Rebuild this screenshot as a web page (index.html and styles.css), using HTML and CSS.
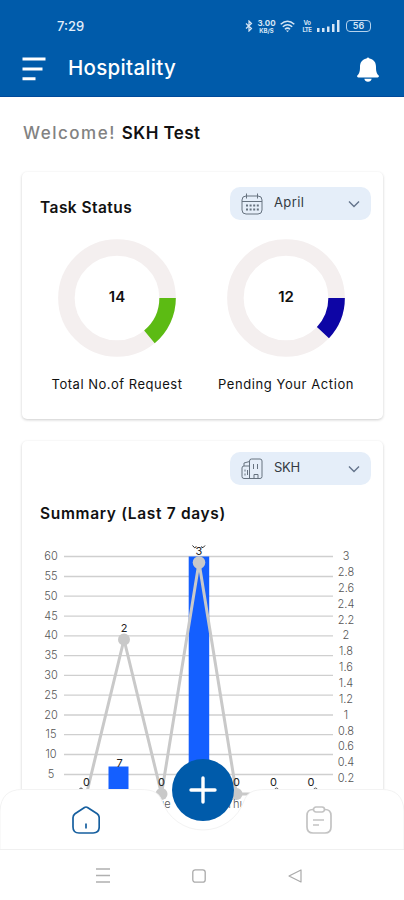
FILE: index.html
```html
<!DOCTYPE html>
<html lang="en">
<head>
    <meta charset="UTF-8">
    <meta name="viewport" content="width=device-width, initial-scale=1.0">
    <title>Hospitality</title>
    <link rel="stylesheet" href="styles.css">
</head>
<body>
    <header class="header">
        <div class="status-bar">
            <span class="time">7:29</span>
            <div class="status-icons">
                <svg width="8" height="12" viewBox="0 0 8 12"><path d="M1 3.500l5.500 5L4 11V1l2.500 2.500L1 8.500" fill="none" stroke="#d6e6f5" stroke-width="1.200"/></svg>
                <div class="speed"><span>3.00</span><span>KB/S</span></div>
                <svg class="wifi" width="15" height="13" viewBox="0 0 15 13" fill="none" stroke="#d6e6f5" stroke-width="1.500"><path d="M.7 4.200Q7.500-1.800 14.300 4.200M2.800 6.800Q7.500 2.600 12.200 6.800M4.900 9.200Q7.500 7 10.100 9.200"/><path d="M6 10.500h3l-1.500 1.800z" fill="#d6e6f5" stroke="none"/></svg>
                <div class="volte"><span>Vo</span><span>LTE</span></div>
                <svg width="23" height="12" viewBox="0 0 23 12" fill="#d6e6f5"><path d="M0 8h2.500v4H0zM5 8h2.500v4H5zM10 6.500h2.500V12H10zM15 4h2.500v8H15zM20 0h2.500v12H20z"/></svg>
                <div class="battery">56</div>
            </div>
        </div>
        <div class="title-bar">
            <svg width="24" height="24" viewBox="0 0 24 24" stroke="#fff" stroke-width="3"><path d="M.5 2h23M.5 12h20M.5 21.800h13"/></svg>
            <h1>Hospitality</h1>
            <svg class="bell" width="22" height="25" viewBox="0 0 22 25" fill="#fff"><path d="M9.500 1.500q1.500-2 3 0C17.500 2.700 19 6 19 10c0 5 .8 6.500 2.500 8.300.8 1 .3 2.200-.8 2.200H1.300C.2 20.500-.3 19.300.5 18.300 2.200 16.500 3 15 3 10c0-4 1.500-7.300 6.500-8.500zM7.300 21.700h7.400q-.7 3-3.700 3t-3.700-3z"/></svg>
        </div>
    </header>

    <main class="content">
        <p class="welcome">Welcome! <b>SKH Test</b></p>

        <section class="card task-card">
            <div class="card-head">
                <h2 class="task-title">Task Status</h2>
                <div class="select">
                    <svg width="22" height="22" viewBox="0 0 22 22" fill="none" stroke="#66727f"><rect x="1" y="3" width="20" height="18" rx="4"/><path d="M1 8.500h20M5.500.5v5M16.500.5v5"/><path d="M5 12.500h13M5 16.500h13" stroke-width="2" stroke-dasharray="2 1.600"/></svg>
                    <span class="april">April</span>
                    <svg class="chevron" width="12" height="8" viewBox="0 0 12 8"><path d="M1 1.500l5 5 5-5" fill="none" stroke="#64748b" stroke-width="1.400"/></svg>
                </div>
            </div>
            <div class="rings">
                <div class="ring-item">
                    <div class="ring">
                        <svg width="118" height="118" viewBox="-59 -59 118 118" fill="none" stroke-width="16.500"><circle r="50.600" stroke="#f4efef"/><circle r="50.600" stroke="#5cbb13" stroke-dasharray="44.200 400"/></svg>
                        <span>14</span>
                    </div>
                    <p class="total">Total No.of Request</p>
                </div>
                <div class="ring-item">
                    <div class="ring">
                        <svg width="118" height="118" viewBox="-59 -59 118 118" fill="none" stroke-width="16.500"><circle r="50.600" stroke="#f4efef"/><circle r="50.600" stroke="#0d05a5" stroke-dasharray="38 400"/></svg>
                        <span>12</span>
                    </div>
                    <p class="pending">Pending Your Action</p>
                </div>
            </div>
        </section>

        <section class="card summary-card">
            <div class="card-head">
                <div class="select">
                    <svg width="22" height="22" viewBox="0 0 22 22" fill="none" stroke="#66727f"><path d="M8.500 20.500V3q0-2 2-2h8.500q2 0 2 2v15.500q0 2-2 2H3q-2 0-2-2V10q0-2 2-2h5.500M3 8V5l5.500-1.500M13 20.500v-4h4v4M12.500 6v5M16.500 6v5M4 11.500v2M4 15.500v2M6.500 12v5"/></svg>
                    <span class="skh">SKH</span>
                    <svg class="chevron" width="12" height="8" viewBox="0 0 12 8"><path d="M1 1.500l5 5 5-5" fill="none" stroke="#64748b" stroke-width="1.400"/></svg>
                </div>
            </div>
            <h2 class="summary-title">Summary (Last 7 days)</h2>
            <svg class="chart" width="360" height="290" viewBox="22 540 360 290">
                <path class="grid" d="M64 556.500h269M64 576.500h269M64 596.200h269M64 616.200h269M64 635.800h269M64 655.600h269M64 675.400h269M64 695.200h269M64 715h269M64 734.700h269M64 754.500h269M64 774.500h269"/>
                <g class="axis">
                    <text x="51" y="560">60</text>
                    <text x="51" y="579.800">55</text>
                    <text x="51" y="599.600">50</text>
                    <text x="51" y="619.500">45</text>
                    <text x="51" y="639.300">40</text>
                    <text x="51" y="659.100">35</text>
                    <text x="51" y="678.900">30</text>
                    <text x="51" y="698.700">25</text>
                    <text x="51" y="718.500">20</text>
                    <text x="51" y="738.300">15</text>
                    <text x="51" y="758.100">10</text>
                    <text x="51" y="778">5</text>
                    <text x="346" y="560">3</text>
                    <text x="346" y="575.900">2.8</text>
                    <text x="346" y="591.700">2.6</text>
                    <text x="346" y="607.600">2.4</text>
                    <text x="346" y="623.500">2.2</text>
                    <text x="346" y="639.300">2</text>
                    <text x="346" y="655.200">1.8</text>
                    <text x="346" y="671">1.6</text>
                    <text x="346" y="686.900">1.4</text>
                    <text x="346" y="702.800">1.2</text>
                    <text x="346" y="718.600">1</text>
                    <text x="346" y="734.500">0.8</text>
                    <text x="346" y="750.300">0.6</text>
                    <text x="346" y="766.200">0.4</text>
                    <text x="346" y="782.100">0.2</text>
                </g>
                <path d="M108.500 766.500h20V789h-20zM188.700 556.500h20.500V789h-20.500z" fill="#145fff"/>
                <path class="line" d="M86.500 794L124 639.500 161.500 794 199 562.500 236.500 794H333"/>
                <g fill="#c9c9c9"><circle cx="124" cy="639.500" r="6"/><circle cx="161.500" cy="794" r="6"/><circle cx="199" cy="562.500" r="6.300"/><circle cx="236.500" cy="794" r="6"/></g>
                <g class="value">
                    <text x="124" y="631.500">2</text>
                    <text x="199" y="554.500">3</text>
                    <text x="119.500" y="766.500">7</text>
                    <text x="86.500" y="786">0</text>
                    <text x="161.500" y="786">0</text>
                    <text x="236.500" y="786">0</text>
                    <text x="273.500" y="786">0</text>
                    <text x="311" y="786">0</text>
                </g>
                <path d="M192.500 545.500l2 2.200 2-1M205 545.500l-2 2.200-2-1" fill="none" stroke="#222"/>
                <path d="M78.500 790q2.500-4 5 0M274 790q2.500-4 5 0M313 790q2.500-4 5 0" fill="none" stroke="#555"/>
                <g class="day"><text x="161" y="808">Tue</text><text x="236" y="808">Thu</text></g>
            </svg>
        </section>
    </main>

    <footer class="bottom">
        <nav class="tabs">
            <svg class="tabs-shape" width="404" height="60" viewBox="0 0 404 60"><path d="M0 61V22Q1 .5 22 .5H140C154 .5 159 4 162 12A43.500 43.500 0 0 0 244 12C247 4 252 .5 266 .5H382Q403 .5 404 22V61z" fill="#fff" stroke="#f3f3f3"/></svg>
            <svg width="28" height="28" viewBox="0 0 28 28" fill="none" stroke="#165f9f" stroke-width="1.700"><path d="M12.500 1.500q1.500-1 3 0l9.700 6.300q2 1.500 2 4V21q0 6-6 6H7q-6 0-6-6v-9.200q0-2.500 2-4zM14 17.500v5"/></svg>
            <svg width="26" height="28" viewBox="0 0 26 28" fill="none" stroke="#c3c3c3" stroke-width="1.700"><path d="M8 3.500H7q-6 0-6 6V21q0 6 6 6h12q6 0 6-6V9.500q0-6-6-6h-1M7 14h11M7 19h6"/><rect x="7.500" y="1" width="11" height="5" rx="2.500"/></svg>
        </nav>
        <div class="system-nav">
            <svg width="14" height="15" viewBox="0 0 14 15" stroke="#b0b0b0" stroke-width="1.300"><path d="M0 1h14M0 7.500h14M0 14h14"/></svg>
            <svg width="14" height="14" viewBox="0 0 14 14" fill="none" stroke="#aaa" stroke-width="1.300"><rect x=".8" y=".8" width="12.400" height="12.400" rx="2.500"/></svg>
            <svg width="14" height="14" viewBox="0 0 14 14" fill="none" stroke="#aaa" stroke-width="1.200"><path d="M13 1v12L1 7z" stroke-linejoin="round"/></svg>
        </div>
        <button class="add" aria-label="Add">
            <svg width="28" height="28" viewBox="0 0 28 28" stroke="#fff" stroke-width="3.400" stroke-linecap="round"><path d="M14 2v24M2 14h24"/></svg>
        </button>
    </footer>
</body>
</html>
```

FILE: styles.css
```css
* {
    box-sizing: border-box;
}
body {
    position: relative;
    width: 404px;
    height: 900px;
    margin: 0;
    overflow: hidden;
    background: #fff;
    color: #111;
    font-family: Inter, "Liberation Sans", sans-serif;
}
h1, h2, p {
    margin: 0;
    white-space: nowrap;
}
svg {
    display: block;
    flex: none;
}
.header {
    height: 97px;
    background: #005baa;
    border-bottom: 1px solid #004a9b;
    color: #fff;
}
.status-bar {
    display: flex;
    justify-content: space-between;
    align-items: center;
    height: 52px;
    padding: 0 33px 0 57px;
}
.time {
    font-size: 13px;
    font-weight: 500;
    color: #e2eefa;
}
.status-icons {
    display: flex;
    align-items: center;
    color: #d6e6f5;
}
.speed, .volte {
    display: flex;
    flex-direction: column;
    align-items: center;
    width: 19px;
    margin-left: 4px;
    font-size: 8px;
    font-weight: 700;
    line-height: 8px;
}
.speed span + span {
    font-size: 6px;
    line-height: 7px;
}
.wifi {
    margin-left: 4px;
}
.volte {
    width: 10px;
    margin: 0 5px 0 7px;
    font-size: 6px;
    line-height: 7px;
    letter-spacing: -0.5px;
}
.battery {
    width: 25px;
    height: 12px;
    margin-left: 6px;
    border: 1.5px solid #b5d2ed;
    border-radius: 4px;
    font-size: 9px;
    font-weight: 600;
    line-height: 10px;
    text-align: center;
}
.title-bar {
    display: flex;
    align-items: center;
    height: 34px;
    padding: 0 25px 0 22px;
}
.title-bar h1 {
    margin: -4px 0 0 22px;
    font-size: 20.5px;
    font-weight: 500;
    letter-spacing: 0.3px;
}
.bell {
    margin-left: auto;
}
.content {
    padding: 25px 22px 0;
}
.welcome {
    height: 50px;
    padding-left: 1px;
    color: #828282;
    font-size: 17px;
    font-weight: 500;
    line-height: 22px;
    letter-spacing: 1.5px;
}
.welcome b {
    color: #111;
    font-weight: 600;
    letter-spacing: 0.4px;
}
.card {
    width: 361px;
    border-radius: 5px;
    background: #fff;
    box-shadow: 0 1px 3px rgba(0, 0, 0, 0.2);
}
.task-card {
    height: 247px;
    padding-top: 15px;
}
.summary-card {
    height: 400px;
    margin-top: 22px;
    padding-top: 11px;
}
.card-head {
    display: flex;
    align-items: center;
    height: 33px;
    padding: 0 12px 0 18px;
}
h2 {
    font-size: 15.5px;
    font-weight: 600;
}
.task-title {
    padding-top: 7px;
    letter-spacing: 0.45px;
}
.select {
    display: flex;
    align-items: center;
    width: 141px;
    height: 33px;
    margin-left: auto;
    padding: 0 11px;
    border-radius: 10px;
    background: #e5eef9;
    color: #343a42;
    font-size: 13px;
}
.select span {
    margin-left: 11px;
    padding-bottom: 3px;
}
.select .april {
    letter-spacing: 0.4px;
}
.select .skh {
    letter-spacing: -0.3px;
}
.chevron {
    margin-left: auto;
}
.rings {
    display: flex;
    gap: 33px;
    padding: 19px 0 0 27px;
}
.ring-item {
    display: flex;
    flex-direction: column;
    align-items: center;
    width: 136px;
}
.ring {
    display: grid;
    place-items: center;
}
.ring svg, .ring span {
    grid-area: 1 / 1;
}
.ring span {
    padding-bottom: 4px;
    font-size: 15px;
    font-weight: 600;
}
.ring-item p {
    margin-top: 18px;
    font-size: 13px;
    line-height: 18px;
    letter-spacing: 0.5px;
}
.ring-item .pending {
    letter-spacing: 0.58px;
}
.summary-title {
    margin-top: 18px;
    padding-left: 18px;
    line-height: 22px;
    letter-spacing: 0.67px;
}
.chart {
    margin-top: 15px;
}
.grid {
    stroke: #cfcfcf;
    stroke-width: 1.3;
}
.line {
    fill: none;
    stroke: #c9c9c9;
    stroke-width: 3;
}
.axis, .value, .day {
    fill: #555;
    font-size: 11px;
    font-weight: 300;
    text-anchor: middle;
}
.value {
    fill: #222;
    font-weight: 400;
}
/* The tab bar covers the end of the chart. */
.bottom {
    position: absolute;
    left: 0;
    bottom: 0;
    width: 404px;
    height: 111px;
}
.tabs {
    position: relative;
    display: flex;
    justify-content: space-between;
    align-items: center;
    height: 60px;
    padding: 2px 72px 0;
}
.tabs svg {
    position: relative;
}
.tabs .tabs-shape {
    position: absolute;
    top: 0;
    left: 0;
}
.system-nav {
    display: flex;
    justify-content: center;
    align-items: center;
    gap: 82px;
    height: 51px;
    padding: 1px 6px 0 0;
    border-top: 1px solid #f0f0f0;
    background: #fff;
}
.add {
    position: absolute;
    top: -30px;
    left: 172px;
    display: grid;
    place-items: center;
    width: 62px;
    height: 62px;
    padding: 0;
    border: none;
    border-radius: 50%;
    background: #005baa;
}
```
